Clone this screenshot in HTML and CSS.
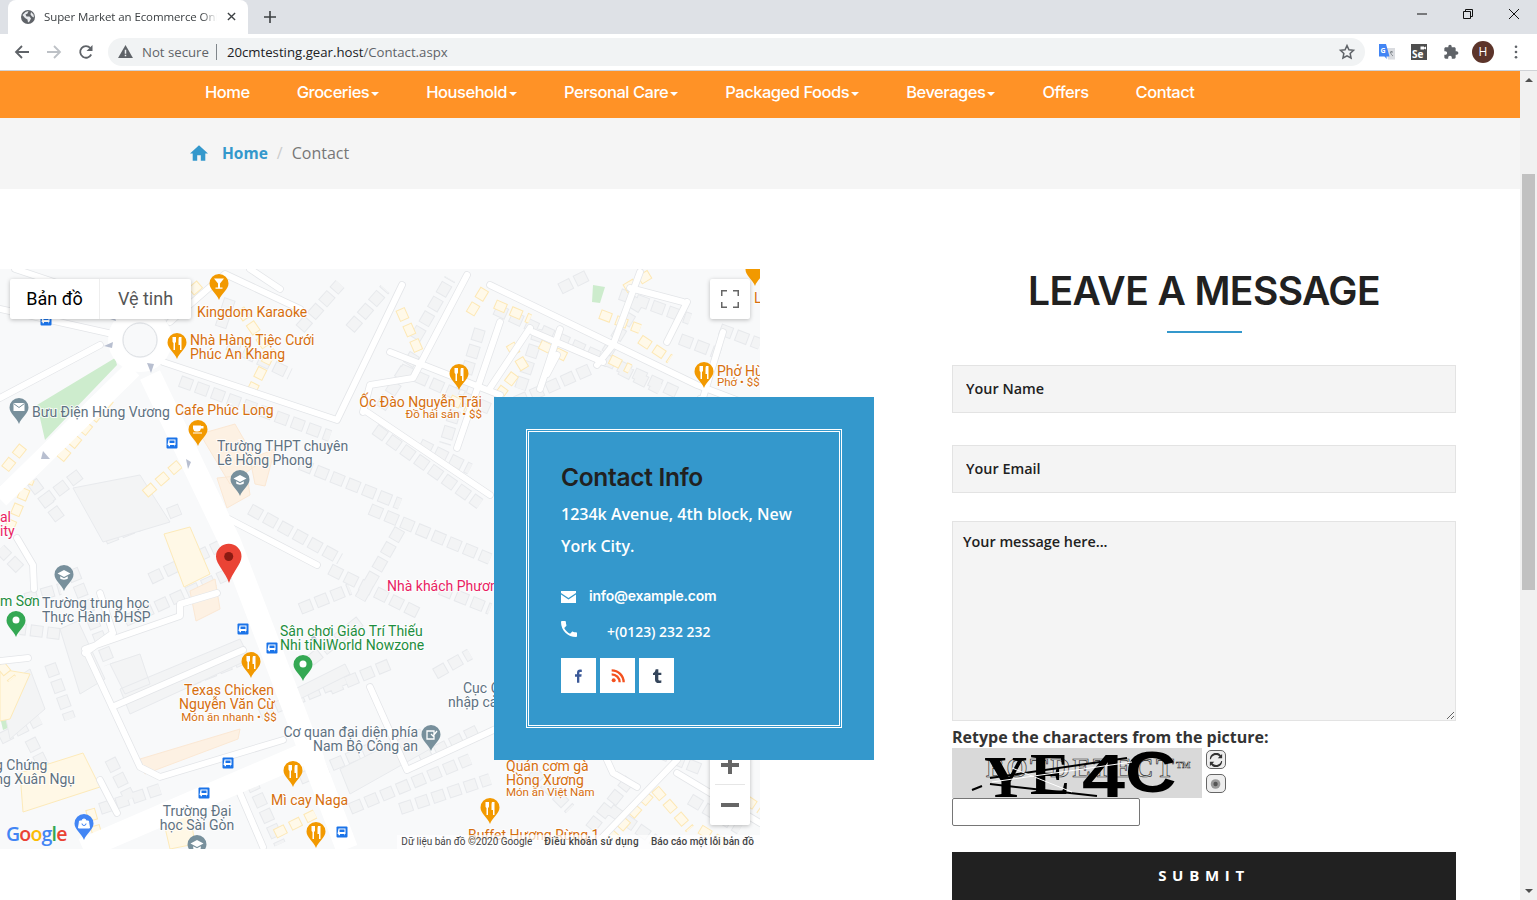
FILE: index.html
```html
<!DOCTYPE html>
<html lang="en">
<head>
<meta charset="utf-8">
<title>Super Market an Ecommerce Online</title>
<link rel="stylesheet" href="styles.css">
</head>
<body>
<div class="window">
  <header class="tabstrip">
    <div class="tab">
      <svg class="favicon" viewBox="0 0 16 16"><circle cx="8" cy="8" r="7" fill="#5f6368"/><path d="M2.500 6l3-3 3-1-1 2.500-2 1 1 2 3 0 1.500 2-1.500 3-1.500 1-.5-3-2.500-1.500zM11 3l2.500 2.500.5 3-2-1-1.500-2z" fill="#e8eaed"/></svg>
      <span class="tab-title">Super Market an Ecommerce Online</span>
      <svg class="tab-close" viewBox="0 0 10 10"><path d="M1 1l8 8M9 1l-8 8" stroke="#3c4043" stroke-width="1.500"/></svg>
    </div>
    <svg class="newtab" viewBox="0 0 12 12"><path d="M6 0v12M0 6h12" stroke="#3c4043" stroke-width="1.600"/></svg>
    <div class="winbtns">
      <svg viewBox="0 0 12 12"><path d="M1 6h10" stroke="#111" stroke-width="1"/></svg>
      <svg viewBox="0 0 12 12"><path d="M1.500 3.500h7v7h-7zM3.500 3.500v-2h7v7h-2" fill="none" stroke="#111" stroke-width="1"/></svg>
      <svg viewBox="0 0 12 12"><path d="M1 1l10 10M11 1L1 11" stroke="#111" stroke-width="1"/></svg>
    </div>
  </header>
  <div class="toolbar">
    <svg class="nav-ico" viewBox="0 0 16 16"><path d="M15 8H2M8 2L2 8l6 6" fill="none" stroke="#5f6368" stroke-width="1.800"/></svg>
    <svg class="nav-ico" viewBox="0 0 16 16"><path d="M1 8h13M8 2l6 6-6 6" fill="none" stroke="#bdc1c6" stroke-width="1.800"/></svg>
    <svg class="nav-ico" viewBox="0 0 16 16"><path d="M13.200 10.500A5.800 5.800 0 1 1 12.300 4" fill="none" stroke="#5f6368" stroke-width="1.800"/><path d="M14.500 1v6h-6z" fill="#5f6368"/></svg>
    <div class="omnibox">
      <svg class="warn" viewBox="0 0 16 14"><path d="M8 0l8 14H0z" fill="#5f6368"/><path d="M7.200 5h1.600v4.500H7.200zM7.200 10.500h1.600V12H7.200z" fill="#f1f3f4"/></svg>
      <span class="notsecure">Not secure</span>
      <span class="omni-div"></span>
      <span class="url"><b>20cmtesting.gear.host</b>/Contact.aspx</span>
      <svg class="star" viewBox="0 0 24 24"><path d="M12 3.500l2.600 5.600 6.100.7-4.500 4.200 1.200 6-5.400-3-5.400 3 1.200-6-4.500-4.200 6.100-.7z" fill="none" stroke="#5f6368" stroke-width="2"/></svg>
    </div>
    <div class="exts">
      <svg viewBox="0 0 16 16"><path d="M7 4h9v11.500H9z" fill="#dadce0"/><path d="M11 8h3M12.500 7v1M11.500 8c.3 2 1.200 3 2.500 4" fill="none" stroke="#80868b" stroke-width="1"/><path d="M0 0h7l3.500 12.500H7.500L7.800 15 5.500 12.500H0z" fill="#4285f4"/><text class="ext-g" x="1.500" y="8.500">G</text></svg>
      <svg viewBox="0 0 16 16"><rect width="16" height="16" fill="#4e4e4e"/><text class="ext-se" x="1" y="14">Se</text><path d="M9.500 2.500h3.500v3H9.500zM13 3.500l2-1v3l-2-1z" fill="#fff"/></svg>
      <svg viewBox="0 0 24 24"><path d="M20.500 11H19V7c0-1.100-.9-2-2-2h-4V3.500C13 2.120 11.880 1 10.500 1S8 2.120 8 3.500V5H4c-1.100 0-1.990.9-1.990 2v3.800H3.500c1.490 0 2.700 1.210 2.700 2.700s-1.210 2.700-2.700 2.700H2V20c0 1.100.9 2 2 2h3.800v-1.500c0-1.490 1.210-2.700 2.700-2.700 1.490 0 2.700 1.210 2.700 2.700V22H17c1.100 0 2-.9 2-2v-4h1.500c1.380 0 2.500-1.120 2.500-2.500S21.880 11 20.500 11z" fill="#5f6368"/></svg>
      <span class="avatar">H</span>
      <svg class="dots" viewBox="0 0 4 16"><circle cx="2" cy="2" r="1.500" fill="#5f6368"/><circle cx="2" cy="8" r="1.500" fill="#5f6368"/><circle cx="2" cy="14" r="1.500" fill="#5f6368"/></svg>
    </div>
  </div>
  <div class="viewport">
    <div class="page">
      <nav class="mainnav">
        <a>Home</a>
        <a class="drop">Groceries</a>
        <a class="drop">Household</a>
        <a class="drop">Personal Care</a>
        <a class="drop">Packaged Foods</a>
        <a class="drop">Beverages</a>
        <a>Offers</a>
        <a>Contact</a>
      </nav>
      <div class="crumbs">
        <svg class="crumb-home" viewBox="2 3 20 17"><path d="M10 20v-6h4v6h5v-8h3L12 3 2 12h3v8z" fill="#3498cc"/></svg>
        <a class="crumb-link">Home</a>
        <span class="crumb-sep">/</span>
        <span class="crumb-cur">Contact</span>
      </div>
      <section class="contact">
        <div class="map">
          <svg class="map-svg" viewBox="0 0 760 580" xmlns="http://www.w3.org/2000/svg">
            <defs>
              <path id="pin" d="M0 26C-2 20-9.500 15.500-9.500 9.500A9.500 9.500 0 1 1 9.500 9.500C9.500 15.500 2 20 0 26Z"/>
              <g id="fork"><path d="M-4.500 4v4.500a1.500 1.500 0 0 0 1 1.400V17h1.500V9.900a1.500 1.500 0 0 0 1-1.400V4M2 4h2.500v13H3v-5H1.500V7C1.500 5 2 4 2 4z" fill="#fff"/></g>
              <g id="cap"><path d="M0 5L-6.500 8.500 0 12l6.500-3.500zM-3.800 11.200v2.300C-2.500 15 2.500 15 3.800 13.500v-2.300L0 13.300z" fill="#fff"/></g>
              <g id="bus"><rect x="-5.500" y="-5.500" width="11" height="11" rx="1" fill="#1a73e8"/><path d="M-3.500-3.500h7v5.500h-1v1.200H2V2h-4v1.200h-1.500V2h-1z" fill="#fff"/><rect x="-2.500" y="-2.500" width="5" height="2.500" fill="#1a73e8"/></g>
              <g id="minor" fill="none" stroke-linejoin="round" stroke-linecap="round">
                <path d="M163 93L337 151 402 16M0 40L117 66M170 53L225 5 300 40M367 143L490 226M390 83L500 126M467 6L413 109 370 116 363 143M500 53L457 179M227 249L317 296M85 380L180 347 180 335 217 324M112 438L243 381M87 384L140 498 160 508 283 471M0 392L28 389M17 269L33 296 34 320M100 511L117 544M233 508L263 578M370 418L407 501 500 458M85 384L113 364 100 324M490 16L697 116 760 140M640 3L613 76 597 96M533 63L603 93M547 105L557 86M723 63L703 129M687 33L667 73M630 19L683 33M490 119L530 59M590 581L677 491M677 504L760 554M607 491L613 504 637 518M250 0L280 20M15 0L60 15M530 145L660 200 700 130M560 60L540 120M0 129L100 76"/>
              </g>
              <g id="rows-grey" fill="none">
                <path d="M180 112L330 167M228 75L290 105M300 60L340 15M400 100L490 140M375 160L480 235M415 70L450 10M480 60L445 175M60 250L30 210M72 300L110 395M150 310L230 272M125 352L235 302M140 432L250 387M25 330L60 320M300 340L350 320M310 392L360 352M370 240L490 290M330 420L390 395M420 490L480 460M250 510L280 575M110 490L130 530M495 40L680 125M500 140L590 100M620 25L690 50M620 100L660 120M720 60L760 75M700 140L760 160M630 510L590 560M690 530L740 560M540 60L520 120M60 365L20 360M20 300L0 280M80 205L40 235M105 270L180 240M250 240L340 290M300 195L400 235M420 175L470 200M330 300L420 345M400 260L360 330M440 320L490 340M435 405L470 385M50 395L70 450M0 470L40 450M30 470L50 510M100 540L160 520M170 540L240 510M260 445L345 410M300 510L370 480M350 540L470 490M400 540L490 510M415 85L380 140M350 60L385 20M230 30L220 60M560 20L590 5M640 30L600 95M680 70L720 85M520 490L570 540M700 500L650 480M610 540L660 575"/>
              </g>
              <g id="rows-yellow" fill="none">
                <path d="M240 40L275 90M156 48L170 30M8 262L30 210M60 190L110 130M5 200L25 175M145 225L185 190M400 40L420 85M450 130L480 145M470 45L485 20M495 35L530 50M510 75L525 100M540 75L570 90M640 70L670 90M600 45L640 60M625 20L650 5M705 135L760 155M610 90L630 100M650 525L610 570M700 560L750 590M275 565L315 545M515 105L500 125M165 45L200 15M250 125L270 85M655 520L690 560M745 530L760 540M0 395L12 410M230 515L255 505M90 540L100 575"/>
              </g>
            </defs>
            <rect class="m-bg" width="760" height="580"/>
            <path class="m-green" d="M37 136L115 89 117 96 45 171ZM593 16L605 18 600 34 592 33ZM0 448L13 436 22 453 3 461Z"/>
            <use href="#rows-grey" class="row-grey-a"/>
            <use href="#rows-grey" class="row-grey-b"/>
            <path class="m-block" d="M73 219L140 206 170 253 103 273ZM60 360L78 352 105 410 80 425ZM0 420L30 400 45 440 10 470ZM110 395L140 385 150 415 125 425ZM295 420L345 395 350 405 300 430ZM340 500L420 460 430 480 350 525ZM120 420L240 370 250 390 130 445Z"/>
            <path class="m-yellow-fill" d="M20 504L83 484 100 518 23 543ZM0 400L30 405 10 450 0 452ZM163 550L190 545 195 575 170 580ZM164 265L190 258 210 305 184 318Z"/>
            <path class="m-peach" d="M217 209L247 206 250 226 227 239ZM200 165L235 155 258 195 230 215ZM250 190L275 180 265 217 255 215ZM190 322L215 310 220 340 196 352ZM140 490L240 460 238 470 145 505Z"/>
            <use href="#rows-yellow" class="row-yellow-a"/>
            <use href="#rows-yellow" class="row-yellow-b"/>
            <use href="#minor" class="road-case"/>
            <use href="#minor" class="road-fill"/>
            <path class="road-main" d="M150 106L230 273 347 580M83 580L320 478"/>
            <path class="road-side" d="M0 230L133 100"/>
            <circle class="road-ring" cx="140" cy="71" r="25"/>
            <circle class="road-island" cx="140" cy="71" r="17"/>
            <path class="m-arrow" d="M107 49l9 3-2-6zM104 77l9-4-1 6zM147 94l4 10 3-9zM186 190l2 10 3-7zM43 182l7 8-9 0zM313 363l-3 10 7-2z"/>
            <text class="lb orange" x="197" y="48">Kingdom Karaoke</text>
            <text class="lb orange" x="190" y="76">Nhà Hàng Tiệc Cưới</text>
            <text class="lb orange" x="190" y="90">Phúc An Khang</text>
            <text class="lb orange" x="175" y="146">Cafe Phúc Long</text>
            <text class="lb orange end" x="482" y="138">Ốc Đào Nguyễn Trãi</text>
            <text class="lb orange small end" x="482" y="149">Đồ hải sản • $$</text>
            <text class="lb orange" x="717" y="107">Phở Hùng</text>
            <text class="lb orange small" x="717" y="117">Phở • $$</text>
            <text class="lb orange" x="754" y="34">L</text>
            <text class="lb orange mid" x="229" y="426">Texas Chicken</text>
            <text class="lb orange mid" x="227" y="440">Nguyễn Văn Cừ</text>
            <text class="lb orange small mid" x="229" y="452">Món ăn nhanh • $$</text>
            <text class="lb orange" x="271" y="536">Mì cay Naga</text>
            <text class="lb orange" x="506" y="502">Quán cơm gà</text>
            <text class="lb orange" x="506" y="516">Hồng Xương</text>
            <text class="lb orange small" x="506" y="527">Món ăn Việt Nam</text>
            <text class="lb orange" x="468" y="571">Buffet Hương Rừng 1</text>
            <text class="lb grey" x="32" y="148">Bưu Điện Hùng Vương</text>
            <text class="lb grey" x="217" y="182">Trường THPT chuyên</text>
            <text class="lb grey" x="217" y="196">Lê Hồng Phong</text>
            <text class="lb grey" x="42" y="339">Trường trung học</text>
            <text class="lb grey" x="42" y="353">Thực Hành ĐHSP</text>
            <text class="lb grey end" x="418" y="468">Cơ quan đại diện phía</text>
            <text class="lb grey end" x="418" y="482">Nam Bộ Công an</text>
            <text class="lb grey mid" x="197" y="547">Trường Đại</text>
            <text class="lb grey mid" x="197" y="561">học Sài Gòn</text>
            <text class="lb grey" x="-5" y="501">g Chứng</text>
            <text class="lb grey end" x="75" y="515">ng Xuân Ngụ</text>
            <text class="lb grey" x="463" y="424">Cục Quản lý</text>
            <text class="lb grey" x="448" y="438">nhập cảnh</text>
            <text class="lb green" x="0" y="337">m Sơn</text>
            <text class="lb green" x="280" y="367">Sân chơi Giáo Trí Thiếu</text>
            <text class="lb green" x="280" y="381">Nhi tiNiWorld Nowzone</text>
            <text class="lb pink" x="387" y="322">Nhà khách Phương</text>
            <text class="lb pink" x="0" y="253">al</text>
            <text class="lb pink" x="0" y="267">ity</text>
            <g class="p-orange">
              <g transform="translate(219 5)"><use href="#pin"/><path d="M-5 4.500h10L1 9.500v4h2.500v1.200h-7v-1.200H-1v-4z" fill="#fff"/></g>
              <g transform="translate(177 64)"><use href="#pin"/><use href="#fork"/></g>
              <g transform="translate(459 95)"><use href="#pin"/><use href="#fork"/></g>
              <g transform="translate(198 151)"><use href="#pin"/><path d="M-5 5.500h8v3a3.500 3.500 0 0 1-3 3h-2a3.500 3.500 0 0 1-3-3zM3 6h2.500v2.500H3zM-5 12.500h9v1h-9z" fill="#fff"/></g>
              <g transform="translate(704 93)"><use href="#pin"/><use href="#fork"/></g>
              <g transform="translate(755 -9)"><use href="#pin"/></g>
              <g transform="translate(251 383)"><use href="#pin"/><use href="#fork"/></g>
              <g transform="translate(293 492)"><use href="#pin"/><use href="#fork"/></g>
              <g transform="translate(316 553)"><use href="#pin"/><use href="#fork"/></g>
              <g transform="translate(490 529)"><use href="#pin"/><use href="#fork"/></g>
            </g>
            <g class="p-grey">
              <g transform="translate(19 129)"><use href="#pin"/><rect x="-5.500" y="5" width="11" height="8" fill="#fff"/><path d="M-5.500 5.500L0 9.500l5.500-4" fill="none" stroke="#78909c"/></g>
              <g transform="translate(240 201)"><use href="#pin"/><use href="#cap"/></g>
              <g transform="translate(64 296)"><use href="#pin"/><use href="#cap"/></g>
              <g transform="translate(197 566)"><use href="#pin"/><use href="#cap"/></g>
              <g transform="translate(431 456)"><use href="#pin"/><path d="M-4 6h7v8h-7zM0 9l2 2 4-5" fill="none" stroke="#fff" stroke-width="1.300"/></g>
            </g>
            <g class="p-green">
              <g transform="translate(16 342)"><use href="#pin"/><circle cy="9" r="3.500" fill="#fff"/></g>
              <g transform="translate(303 386)"><use href="#pin"/><circle cy="9" r="3.500" fill="#fff"/></g>
            </g>
            <g transform="translate(84 545)"><use href="#pin" class="p-blue"/><path d="M-4.500 7h9l1 7h-11zM-2 7a2 2 0 0 1 4 0" fill="#fff" stroke="#fff"/><path d="M-2 9.500a2 2 0 0 0 4 0" fill="none" stroke="#4285f4"/></g>
            <path class="p-red" d="M229 314C226 304 216 295 216 287.500A12.700 12.700 0 1 1 241.500 287.500C241.500 295 232 304 229 314Z"/>
            <circle class="p-reddot" cx="228.700" cy="287.500" r="4.500"/>
            <use href="#bus" x="46" y="51"/><use href="#bus" x="172" y="174"/><use href="#bus" x="243" y="360"/><use href="#bus" x="272" y="379"/><use href="#bus" x="228" y="494"/><use href="#bus" x="204" y="524"/><use href="#bus" x="342" y="563"/>
            <text class="google" x="6" y="572"><tspan class="g-b">G</tspan><tspan class="g-r">o</tspan><tspan class="g-y">o</tspan><tspan class="g-b">g</tspan><tspan class="g-g">l</tspan><tspan class="g-r">e</tspan></text>
          </svg>
          <div class="maptype"><span class="mt-on">Bản đồ</span><span class="mt-off">Vệ tinh</span></div>
          <div class="fs-btn"><svg viewBox="0 0 18 18"><path d="M0 6V0h6M12 0h6v6M18 12v6h-6M6 18H0v-6" fill="none" stroke="#666" stroke-width="3"/></svg></div>
          <div class="zoom-btns">
            <div class="zoom-one"><svg viewBox="0 0 18 18"><path d="M9 0v18M0 9h18" stroke="#666" stroke-width="4"/></svg></div>
            <div class="zoom-line"></div>
            <div class="zoom-one"><svg viewBox="0 0 18 18"><path d="M0 9h18" stroke="#666" stroke-width="4"/></svg></div>
          </div>
          <div class="attrib"><span>Dữ liệu bản đồ ©2020 Google</span><span class="attrib-b attrib-w">Điều khoản sử dụng</span><span class="attrib-b">Báo cáo một lỗi bản đồ</span></div>
        </div>
        <aside class="card">
          <div class="card-in">
            <h3>Contact Info</h3>
            <p class="addr">1234k Avenue, 4th block, New York City.</p>
            <div class="line mail">
              <svg viewBox="0 0 15 12"><path d="M0 0h15v2L7.500 7 0 2z" fill="#fff"/><path d="M0 3.500L7.500 8.500 15 3.500V12H0z" fill="#fff"/></svg>
              <span>info@example.com</span>
            </div>
            <div class="line phone">
              <svg viewBox="3 3 18 18"><path d="M6.600 10.800c1.400 2.800 3.800 5.100 6.600 6.600l2.200-2.200c.3-.3.700-.4 1-.2 1.100.4 2.300.6 3.600.6.600 0 1 .4 1 1V20c0 .6-.4 1-1 1C10.600 21 3 13.400 3 4c0-.6.4-1 1-1h3.500c.6 0 1 .4 1 1 0 1.300.2 2.500.6 3.600.1.300 0 .7-.2 1z" fill="#fff"/></svg>
              <span>+(0123) 232 232</span>
            </div>
            <div class="social">
              <a><svg viewBox="0 0 24 24"><path d="M9 22v-9H6V9.500h3V7c0-3 1.800-4.600 4.500-4.600 1.300 0 2.400.1 2.700.1V6h-1.900c-1.500 0-1.800.7-1.800 1.800v1.700h3.500l-.5 3.500h-3v9z" fill="#3b5998"/></svg></a>
              <a><svg viewBox="0 0 24 24"><circle cx="5.500" cy="18.500" r="3" fill="#f4511e"/><path d="M2.500 9.500a12 12 0 0 1 12 12M2.500 3.500a18 18 0 0 1 18 18" fill="none" stroke="#f4511e" stroke-width="3.500"/></svg></a>
              <a><svg viewBox="0 0 24 24"><path d="M14 2v5h4.500v3.500H14v6.500c0 2 1.500 2.300 4.500 1.500v3.500c-5 1.500-9.500.5-9.500-4.500v-7H6V8c2.500-1 3.500-3 4-6z" fill="#35465c"/></svg></a>
            </div>
          </div>
        </aside>
        <form class="msg">
          <h2>LEAVE A MESSAGE</h2>
          <div class="rule"></div>
          <input class="field" type="text" placeholder="Your Name">
          <input class="field" type="email" placeholder="Your Email">
          <textarea class="area" placeholder="Your message here..."></textarea>
          <label class="cap-label">Retype the characters from the picture:</label>
          <div class="cap-row">
            <svg class="cap-img" viewBox="0 0 250 50">
              <rect width="250" height="50" fill="#d9d9d9"/>
              <text class="cap-outline" x="34" y="29">BOTDETECT</text>
              <text class="cap-tm" x="224" y="20">TM</text>
              <text class="cap-big" x="32" y="49">Y</text>
              <text class="cap-big" x="78" y="46">E</text>
              <text class="cap-big2" transform="translate(130 49) scale(1.250 1)">4</text>
              <text class="cap-big2" transform="translate(173 44) scale(1.150 .93)">C</text>
              <path d="M38 30L175 10M38 36L145 48M20 42L30 38" stroke="#000" stroke-width="2" fill="none"/>
              <path d="M40 34L180 14M60 20L120 44" stroke="#fff" stroke-width="1" fill="none"/>
            </svg>
            <div class="cap-btns">
              <span class="cap-btn"><svg viewBox="0 0 16 16"><path d="M2 7a6 6 0 0 1 10-3l-2 2h5V1l-1.500 1.500A7 7 0 0 0 1 7zM14 9a6 6 0 0 1-10 3l2-2H1v5l1.500-1.500A7 7 0 0 0 15 9z" fill="#333"/></svg></span>
              <span class="cap-btn"><svg viewBox="0 0 16 16"><circle cx="7.500" cy="8" r="5.500" fill="#999"/><circle cx="7.500" cy="8" r="2.500" fill="#555"/></svg></span>
            </div>
          </div>
          <input class="cap-input" type="text">
          <button class="submit" type="button">SUBMIT</button>
        </form>
      </section>
    </div>
    <div class="scrollbar">
      <span class="arrow-up"></span>
      <span class="thumb"></span>
      <span class="arrow-down"></span>
    </div>
  </div>
</div>
</body>
</html>
```
FILE: styles.css
```css
* { box-sizing: border-box; }
html, body { margin: 0; height: 100%; overflow: hidden; background: #fff; }
body { font-family: "Open Sans", "Liberation Sans", sans-serif; color: #212121; }
.window { height: 900px; display: flex; flex-direction: column; }

/* browser chrome */
.tabstrip { height: 34px; background: #dee1e6; display: flex; align-items: flex-end; padding-left: 8px; flex: none; }
.tab { width: 240px; height: 34px; background: #fff; border-radius: 8px 8px 0 0; display: flex; align-items: center; padding: 0 12px 1px; position: relative; }
.favicon { width: 16px; height: 16px; margin-right: 8px; flex: none; }
.tab-title { font: 11.500px "Open Sans", sans-serif; color: #3c4043; width: 173px; white-space: nowrap; overflow: hidden; letter-spacing: -.1px; -webkit-mask-image: linear-gradient(90deg, #000 158px, transparent 173px); mask-image: linear-gradient(90deg, #000 158px, transparent 173px); }
.tab-close { width: 9px; height: 9px; margin-left: 10px; flex: none; }
.newtab { width: 12px; height: 12px; margin: 0 0 11px 16px; }
.winbtns { margin-left: auto; display: flex; gap: 34px; padding-right: 17px; align-self: flex-start; padding-top: 8px; }
.winbtns svg { width: 12px; height: 12px; }
.toolbar { height: 37px; background: #fff; border-bottom: 1px solid #d0d2d6; display: flex; align-items: center; padding: 0 0 1px 14px; flex: none; }
.nav-ico { width: 16px; height: 16px; margin-right: 16px; flex: none; }
.omnibox { width: 1257px; height: 28px; margin-left: -2px; background: #f1f3f4; border-radius: 14px; display: flex; align-items: center; padding: 0 9px 0 10px; flex: none; font: 13.200px "Open Sans", sans-serif; }
.warn { width: 15px; height: 13px; margin-right: 9px; }
.notsecure { color: #5f6368; }
.omni-div { width: 1px; height: 16px; background: #80868b; margin: 0 10px 0 7px; }
.url { color: #5f6368; }
.url b { font-weight: 400; color: #202124; }
.star { width: 18px; height: 18px; margin-left: auto; }
.exts { display: flex; align-items: center; margin-left: 14px; gap: 16px; }
.exts svg { width: 16px; height: 16px; flex: none; }
.exts .dots { width: 4px; height: 14px; margin-left: 7px; }
.avatar { width: 22px; height: 22px; border-radius: 50%; background: #5c342a; color: #fff; font: 12px/22px "Open Sans", sans-serif; text-align: center; margin-left: -3px; margin-right: -3px; }
.ext-g { font: 700 7px "Open Sans", sans-serif; fill: #fff; }
.ext-se { font: 700 10px "Open Sans", sans-serif; fill: #fff; }

/* page */
.viewport { flex: 1; display: flex; min-height: 0; }
.page { flex: 1; min-width: 0; overflow: hidden; }
.scrollbar { width: 17px; background: #f1f1f1; position: relative; flex: none; display: flex; flex-direction: column; align-items: center; }
.arrow-up { margin-top: 7px; border: 4px solid transparent; border-top: 0; border-bottom: 4px solid #505050; }
.thumb { width: 13px; height: 416px; background: #c1c1c1; margin-top: 92px; }
.arrow-down { margin-top: auto; margin-bottom: 7px; border: 4px solid transparent; border-bottom: 0; border-top: 4px solid #505050; }

.mainnav { height: 47px; background: #ff9226; display: flex; align-items: center; gap: 47px; padding-left: 205px; padding-bottom: 5px; font: 500 16.500px "Inter", "Lato", sans-serif; letter-spacing: -.48px; color: #fff; }
.mainnav .drop::after { content: ""; display: inline-block; margin-left: 2px; vertical-align: middle; border: 4px solid transparent; border-bottom: 0; border-top: 4px solid #fff; }
.crumbs { height: 71px; background: #f5f5f5; display: flex; align-items: center; padding: 0 0 1px 190px; font-size: 16px; }
.crumb-home { width: 18px; height: 16px; margin-right: 14px; }
.crumb-link { font-weight: 700; color: #3498cc; font-size: 15.500px; }
.crumb-sep { color: #ccc; margin: 0 9px; }
.crumb-cur { color: #777; }

.contact { position: relative; padding-top: 80px; display: flex; align-items: flex-start; }
.map { width: 760px; height: 580px; position: relative; overflow: hidden; flex: none; }
.map-svg { display: block; width: 760px; height: 580px; }
.m-bg { fill: #f8f9fa; }
.m-green { fill: #cdeccd; }
.m-block { fill: #f3f4f5; stroke: #e8eaed; }
.m-yellow-fill { fill: #fff8e6; stroke: #fdeab9; }
.m-peach { fill: #fdf1e3; stroke: #fbe8d4; }
.row-grey-a { stroke: #e7e9ec; stroke-width: 12; stroke-dasharray: 13 4; }
.row-grey-b { stroke: #f3f4f5; stroke-width: 10; stroke-dasharray: 11 6; stroke-dashoffset: -1; }
.row-yellow-a { stroke: #fde8b5; stroke-width: 10; stroke-dasharray: 12 5; }
.row-yellow-b { stroke: #fff9e9; stroke-width: 8; stroke-dasharray: 10 7; stroke-dashoffset: -1; }
.road-case { stroke: #e3e5e8; stroke-width: 7.500; }
.road-fill { stroke: #fff; stroke-width: 6; }
.road-main { fill: none; stroke: #fff; stroke-width: 22; }
.road-side { fill: none; stroke: #fff; stroke-width: 18; }
.road-ring { fill: none; stroke: #fff; stroke-width: 14; }
.road-island { fill: #f8f9fa; stroke: #dcdfe3; }
.m-arrow { fill: #b8bfd0; }
.lb { font: 14px Roboto, sans-serif; paint-order: stroke; stroke: #fff; stroke-width: 2px; stroke-opacity: .75; }
.small { font-size: 11.500px; }
.end { text-anchor: end; }
.mid { text-anchor: middle; }
.orange { fill: #d66f0f; }
.grey { fill: #5f7282; }
.green { fill: #1e8e3e; }
.pink { fill: #e91e63; }
.p-orange { fill: #f29900; }
.p-grey { fill: #78909c; }
.p-green { fill: #34a853; }
.p-blue { fill: #4285f4; }
.p-red { fill: #ea4335; }
.p-reddot { fill: #8a1a12; }
.google { font: 600 19.500px "Open Sans", sans-serif; letter-spacing: -.8px; }
.g-b { fill: #4285f4; } .g-r { fill: #ea4335; } .g-y { fill: #fbbc05; } .g-g { fill: #34a853; }

.maptype { position: absolute; left: 10px; top: 10px; height: 40px; width: 181px; background: #fff; display: flex; border-radius: 2px; box-shadow: 0 1px 4px rgba(0,0,0,.25); font: 18px/40px Roboto, sans-serif; }
.mt-on { width: 90px; text-align: center; color: #000; border-right: 1px solid #eee; }
.mt-off { flex: 1; text-align: center; color: #565656; }
.fs-btn { position: absolute; left: 710px; top: 10px; width: 40px; height: 40px; background: #fff; border-radius: 2px; box-shadow: 0 1px 4px rgba(0,0,0,.25); display: flex; align-items: center; justify-content: center; }
.fs-btn svg { width: 18px; height: 18px; }
.zoom-btns { position: absolute; left: 710px; top: 476px; width: 40px; height: 80px; background: #fff; border-radius: 2px; box-shadow: 0 1px 4px rgba(0,0,0,.25); }
.zoom-one { height: 40px; display: flex; align-items: center; justify-content: center; }
.zoom-one svg { width: 18px; height: 18px; }
.zoom-line { height: 1px; width: 30px; background: #e6e6e6; margin: -1px auto 0; }
.attrib { position: absolute; right: 0; bottom: 0; height: 14px; display: flex; gap: 12px; padding: 0 6px 0 4px; font: 10px/14px Roboto, sans-serif; color: #444; background: rgba(255,255,255,.7); }
.attrib-b { font-weight: 500; }
.attrib-w { letter-spacing: .33px; }

.card { position: absolute; left: 494px; top: 208px; width: 380px; height: 363px; background: #3498cc; padding: 32px; }
.card-in { height: 299px; border: 3px double #fff; padding: 27px 20px 0 32px; }
.card-in h3 { margin: 0; font: 600 24.500px/36px "Inter", "Lato", sans-serif; letter-spacing: -.3px; color: #212121; }
.addr { margin: 3px 0 23px; font: 600 16px/32px "Open Sans", sans-serif; color: #fff; }
.line { display: flex; align-items: center; color: #fff; }
.mail { height: 22px; font: 600 14px/22px "Inter", "Lato", sans-serif; letter-spacing: -.22px; }
.mail svg { width: 15px; height: 12px; margin-right: 13px; margin-top: 2px; }
.phone { height: 22px; margin-top: 14px; font: 600 13.900px/22px "Open Sans", sans-serif; }
.phone svg { width: 16px; height: 16px; margin-right: 30px; margin-top: -6px; }
.social { display: flex; gap: 4px; margin-top: 15px; }
.social a { width: 35px; height: 35px; background: #fff; display: flex; align-items: center; justify-content: center; }
.social svg { width: 16px; height: 16px; }

.msg { width: 504px; margin-left: 192px; flex: none; display: flex; flex-direction: column; }
.msg h2 { margin: 0; text-align: center; font: 600 39px/44px "Inter", "Lato", sans-serif; letter-spacing: -.58px; color: #212121; }
.rule { width: 75px; height: 2px; background: #3498cc; margin: 18px auto 32px; }
.field, .area { display: block; width: 504px; background: #f4f4f4; border: 1px solid #e3e3e3; outline: none; font: 600 14.400px "Open Sans", sans-serif; color: #212121; }
.field { height: 48px; padding: 0 13px 2px; margin-bottom: 32px; }
.field + .area { margin-top: -4px; }
.area { height: 200px; padding: 10px; }
.field::placeholder, .area::placeholder { color: #212121; opacity: 1; }
.cap-label { font: 700 16px/22px "Open Sans", sans-serif; color: #333; margin-top: 5px; height: 22px; }
.cap-row { display: flex; height: 50px; }
.cap-img { width: 250px; height: 50px; display: block; }
.cap-btns { display: flex; flex-direction: column; gap: 5px; margin: 2px 0 0 4px; }
.cap-btn { width: 20px; height: 19px; border: 1px solid #666; border-radius: 5px; background: #eee; display: flex; align-items: center; justify-content: center; }
.cap-btn svg { width: 14px; height: 14px; }
.cap-outline { font: 700 27px "Liberation Serif", serif; fill: none; stroke: #222; stroke-width: .6; letter-spacing: 2.500px; }
.cap-tm { font: 700 9px "Liberation Serif", serif; fill: none; stroke: #222; stroke-width: .4; }
.cap-big { font: 700 60px "Liberation Serif", serif; fill: #000; }
.cap-big2 { font: 700 62px "Liberation Sans", sans-serif; fill: #000; }
.cap-input { width: 188px; height: 28px; border: 1px solid #767676; border-radius: 2px; background: #fff; display: block; outline: none; }
.submit { width: 504px; height: 48px; margin-top: 26px; padding-bottom: 4px; background: #212121; border: 0; color: #fff; font: 700 15px "Open Sans", sans-serif; letter-spacing: 5.700px; flex: none; }
```
